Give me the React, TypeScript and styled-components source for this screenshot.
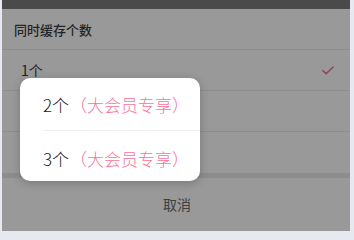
import React from 'react';
import styled, { createGlobalStyle } from 'styled-components';

const GlobalStyle = createGlobalStyle`
  html, body {
    margin: 0;
    padding: 0;
    background: #e6e9ef;
  }
  body {
    font-family: 'Noto Sans CJK SC', 'Noto Sans', sans-serif;
  }
`;

// rows of the sheet behind the popup; the vip rows are covered by it
const cacheOptions = [
  { count: 1, vip: false, selected: true },
  { count: 2, vip: true, selected: false },
  { count: 3, vip: true, selected: false },
];

function CheckIcon() {
  return (
    <svg width="12" height="9" viewBox="0 0 12 9" fill="none">
      <polyline
        points="0.8,4.6 4.2,7.6 11.2,1"
        stroke="#fb7299"
        strokeWidth="1.5"
        strokeLinecap="round"
        strokeLinejoin="round"
      />
    </svg>
  );
}

export default function App() {
  const vipOptions = cacheOptions.filter((o) => o.vip);

  return (
    <>
      <GlobalStyle />
      <Phone>
        <StatusBar />
        <Sheet>
          <SheetTitle>同时缓存个数</SheetTitle>
          {cacheOptions.map((opt, i) => (
            <SheetRow key={opt.count} $last={i === cacheOptions.length - 1}>
              {!opt.vip && <span>{opt.count}个</span>}
              {opt.selected && <CheckIcon />}
            </SheetRow>
          ))}
          <Gap />
          <Cancel>取消</Cancel>
        </Sheet>
        <Mask />
        <Popup>
          {vipOptions.map((opt, i) => (
            <React.Fragment key={opt.count}>
              {i > 0 && <PopupDivider />}
              <PopupRow $height={i === 0 ? 52 : 50} $offset={i === 0 ? 0 : 4}>
                {opt.count}个<Vip>（大会员专享）</Vip>
              </PopupRow>
            </React.Fragment>
          ))}
        </Popup>
      </Phone>
    </>
  );
}

const Phone = styled.div`
  position: relative;
  width: 348px;
  height: 231px;
  margin-left: 2px;
  overflow: hidden;
  background: #fff;
`;

const StatusBar = styled.div`
  height: 9px;
  background: #7c7c7c;
`;

const Sheet = styled.div`
  display: flex;
  flex-direction: column;
  background: #fff;
`;

const SheetTitle = styled.div`
  box-sizing: border-box;
  height: 41px;
  display: flex;
  align-items: center;
  padding-left: 12px;
  font-size: 13px;
  font-weight: 500;
  color: #3c3c3c;
  border-bottom: 1px solid #ececec;
`;

const SheetRow = styled.div<{ $last?: boolean }>`
  box-sizing: border-box;
  height: 41px;
  display: flex;
  align-items: center;
  justify-content: space-between;
  padding: 0 16px 0 19px;
  font-size: 14px;
  color: #3a3a3a;
  border-bottom: ${(p) => (p.$last ? 'none' : '1px solid #ececec')};
`;

const Gap = styled.div`
  height: 5px;
  background: #ececec;
`;

const Cancel = styled.div`
  height: 52px;
  display: flex;
  align-items: center;
  justify-content: center;
  font-size: 14px;
  color: #6a6a6a;
  padding-left: 2px;
`;

const Mask = styled.div`
  position: absolute;
  inset: 0;
  background: rgba(0, 0, 0, 0.4);
`;

const Popup = styled.div`
  position: absolute;
  left: 18px;
  top: 78px;
  width: 180px;
  border-radius: 10px;
  background: #fff;
  box-shadow: 0 2px 10px rgba(0, 0, 0, 0.22);
  overflow: hidden;
`;

const PopupRow = styled.div<{ $height: number; $offset?: number }>`
  box-sizing: border-box;
  height: ${(p) => p.$height}px;
  display: flex;
  align-items: center;
  padding: ${(p) => p.$offset ?? 0}px 0 0 23px;
  font-size: 17px;
  font-weight: 300;
  color: #222;
  white-space: nowrap;
`;

const PopupDivider = styled.div`
  height: 1px;
  margin-left: 23px;
  background: #eeeeee;
`;

const Vip = styled.span`
  margin-left: 1px;
  color: #fb7299;
`;
